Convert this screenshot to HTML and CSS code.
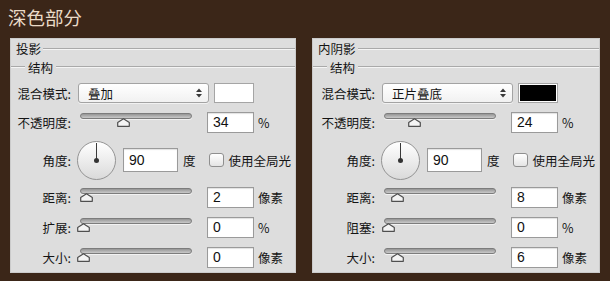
FILE: index.html
```html
<!DOCTYPE html>
<html lang="zh-CN">
<head>
    <meta charset="UTF-8">
    <meta name="viewport" content="width=device-width, initial-scale=1.0">
    <title>深色部分</title>
    <link rel="stylesheet" href="styles.css">
</head>
<body>
    <h1 class="title">深色部分</h1>

    <div class="panels">
        <!-- 投影 -->
        <section class="panel">
            <div class="group-title"><span>投影</span></div>
            <div class="sub-title"><span>结构</span></div>

            <div class="row row-blend">
                <span class="label">混合模式:</span>
                <div class="select">
                    <span>叠加</span>
                    <svg class="arrows" width="6" height="10" viewBox="0 0 6 10"><polygon points="0,4 3,0.5 6,4"/><polygon points="0,6 3,9.5 6,6"/></svg>
                </div>
                <div class="swatch"></div>
            </div>

            <div class="row row-slider">
                <span class="label">不透明度:</span>
                <div class="slider">
                    <div class="track"></div>
                    <svg class="thumb" style="left: 40px" width="13" height="9" viewBox="0 0 13 9"><polygon points="6.5,0.7 12.3,4.5 12.3,8.3 0.7,8.3 0.7,4.5"/></svg>
                </div>
                <div class="field">34</div>
                <span class="unit">%</span>
            </div>

            <div class="row row-angle">
                <span class="label">角度:</span>
                <div class="dial"><div class="needle"></div><div class="hub"></div></div>
                <div class="field field-angle">90</div>
                <span class="unit">度</span>
                <div class="check"></div>
                <span class="check-text">使用全局光</span>
            </div>

            <div class="row row-slider">
                <span class="label">距离:</span>
                <div class="slider">
                    <div class="track"></div>
                    <svg class="thumb" style="left: 3px" width="13" height="9" viewBox="0 0 13 9"><polygon points="6.5,0.7 12.3,4.5 12.3,8.3 0.7,8.3 0.7,4.5"/></svg>
                </div>
                <div class="field">2</div>
                <span class="unit">像素</span>
            </div>

            <div class="row row-slider">
                <span class="label">扩展:</span>
                <div class="slider">
                    <div class="track"></div>
                    <svg class="thumb" style="left: 0px" width="13" height="9" viewBox="0 0 13 9"><polygon points="6.5,0.7 12.3,4.5 12.3,8.3 0.7,8.3 0.7,4.5"/></svg>
                </div>
                <div class="field">0</div>
                <span class="unit">%</span>
            </div>

            <div class="row row-slider">
                <span class="label">大小:</span>
                <div class="slider">
                    <div class="track"></div>
                    <svg class="thumb" style="left: 0px" width="13" height="9" viewBox="0 0 13 9"><polygon points="6.5,0.7 12.3,4.5 12.3,8.3 0.7,8.3 0.7,4.5"/></svg>
                </div>
                <div class="field">0</div>
                <span class="unit">像素</span>
            </div>
        </section>

        <!-- 内阴影 -->
        <section class="panel panel-wide">
            <div class="group-title"><span>内阴影</span></div>
            <div class="sub-title"><span>结构</span></div>

            <div class="row row-blend">
                <span class="label">混合模式:</span>
                <div class="select">
                    <span>正片叠底</span>
                    <svg class="arrows" width="6" height="10" viewBox="0 0 6 10"><polygon points="0,4 3,0.5 6,4"/><polygon points="0,6 3,9.5 6,6"/></svg>
                </div>
                <div class="swatch swatch-black"></div>
            </div>

            <div class="row row-slider">
                <span class="label">不透明度:</span>
                <div class="slider">
                    <div class="track"></div>
                    <svg class="thumb" style="left: 27px" width="13" height="9" viewBox="0 0 13 9"><polygon points="6.5,0.7 12.3,4.5 12.3,8.3 0.7,8.3 0.7,4.5"/></svg>
                </div>
                <div class="field">24</div>
                <span class="unit">%</span>
            </div>

            <div class="row row-angle">
                <span class="label">角度:</span>
                <div class="dial"><div class="needle"></div><div class="hub"></div></div>
                <div class="field field-angle">90</div>
                <span class="unit">度</span>
                <div class="check"></div>
                <span class="check-text">使用全局光</span>
            </div>

            <div class="row row-slider">
                <span class="label">距离:</span>
                <div class="slider">
                    <div class="track"></div>
                    <svg class="thumb" style="left: 10px" width="13" height="9" viewBox="0 0 13 9"><polygon points="6.5,0.7 12.3,4.5 12.3,8.3 0.7,8.3 0.7,4.5"/></svg>
                </div>
                <div class="field">8</div>
                <span class="unit">像素</span>
            </div>

            <div class="row row-slider">
                <span class="label">阻塞:</span>
                <div class="slider">
                    <div class="track"></div>
                    <svg class="thumb" style="left: 1px" width="13" height="9" viewBox="0 0 13 9"><polygon points="6.5,0.7 12.3,4.5 12.3,8.3 0.7,8.3 0.7,4.5"/></svg>
                </div>
                <div class="field">0</div>
                <span class="unit">%</span>
            </div>

            <div class="row row-slider">
                <span class="label">大小:</span>
                <div class="slider">
                    <div class="track"></div>
                    <svg class="thumb" style="left: 10px" width="13" height="9" viewBox="0 0 13 9"><polygon points="6.5,0.7 12.3,4.5 12.3,8.3 0.7,8.3 0.7,4.5"/></svg>
                </div>
                <div class="field">6</div>
                <span class="unit">像素</span>
            </div>
        </section>
    </div>
</body>
</html>
```

FILE: styles.css
```css
:root {
    --background-color: #3b2618;
    --title-color: #eadbc8;
    --panel-background: #dddddd;
    --text-color: #141414;
    --edge-color: #9a9a9a;
}

body {
    margin: 0;
    width: 610px;
    height: 281px;
    overflow: hidden;
    background: var(--background-color);
    font-family: "Noto Sans CJK SC", sans-serif;
}

.title {
    margin: 0;
    height: 38px;
    padding: 5px 0 0 8px;
    box-sizing: border-box;
    font-size: 18.5px;
    font-weight: normal;
    line-height: 24px;
    color: var(--title-color);
}

.panels {
    display: flex;
    gap: 16px;
    padding-left: 10px;
}

.panel {
    width: 286px;
    height: 235px;
    box-sizing: border-box;
    background: var(--panel-background);
    border: 1px solid #cbcbcb;
    font-size: 12.5px;
    color: var(--text-color);
}

.panel-wide {
    width: 288px;
}

/* etched section titles */
.group-title,
.sub-title {
    display: flex;
    align-items: center;
}

.group-title {
    height: 19px;
    padding-left: 5px;
}

.sub-title {
    height: 18px;
}

.group-title::after,
.sub-title::after,
.sub-title::before {
    content: "";
    flex: 1;
    border-top: 1px solid #a9a9a9;
    border-bottom: 1px solid #f4f4f4;
}

.group-title::after {
    margin-left: 2px;
}

.sub-title::before {
    flex: 0 0 14px;
    margin-right: 3px;
}

.sub-title::after {
    margin-left: 3px;
}

/* rows */
.row {
    display: flex;
    align-items: center;
}

.row-blend {
    height: 20px;
    margin-top: 7px;
}

.row-slider {
    height: 21px;
    margin-top: 9px;
}

.row-angle {
    height: 40px;
    margin-top: 7px;
}

.row-angle + .row-slider {
    margin-top: 7px;
}

.label {
    width: 60px;
    flex-shrink: 0;
    text-align: right;
}

.panel-wide .label {
    width: 62px;
}

.select {
    display: flex;
    align-items: center;
    justify-content: space-between;
    width: 131px;
    height: 20px;
    margin-left: 7px;
    padding: 0 6px 0 9px;
    box-sizing: border-box;
    border: 1px solid #a3a3a3;
    border-radius: 3px;
    background: linear-gradient(#ffffff, #f1f1f1);
    box-shadow: 0 1px 0 rgba(255, 255, 255, 0.6);
}

.arrows {
    fill: #3a3a3a;
}

.swatch {
    width: 40px;
    height: 20px;
    margin-left: 5px;
    box-sizing: border-box;
    border: 1px solid #a5a5a5;
    background: #fff;
}

.swatch-black {
    background: #000;
    box-shadow: inset 0 0 0 1px #fff;
}

.slider {
    position: relative;
    align-self: flex-start;
    width: 115px;
    height: 21px;
    margin-left: 6px;
}

.track {
    height: 6px;
    margin: 1px 0 0 3px;
    box-sizing: border-box;
    border: 1px solid #7c7c7c;
    border-radius: 3px;
    background: linear-gradient(#959595, #c9c9c9);
    box-shadow: 0 1px 0 #f2f2f2;
}

.thumb {
    position: absolute;
    top: 6px;
}

.thumb polygon {
    fill: #f4f4f4;
    stroke: #4f4f4f;
    stroke-width: 1.2;
    stroke-linejoin: round;
}

.field {
    width: 47px;
    height: 21px;
    margin-left: 15px;
    padding-left: 5px;
    box-sizing: border-box;
    border: 1px solid var(--edge-color);
    background: #fff;
    box-shadow: inset 0 1px 1px rgba(0, 0, 0, 0.12);
    font-family: "Liberation Sans", Arial, sans-serif;
    font-size: 14px;
    line-height: 19px;
    color: #111;
}

.field-angle {
    width: 55px;
    height: 24px;
    margin-left: 7px;
    line-height: 22px;
}

.unit {
    margin-left: 4px;
}

.field-angle + .unit {
    margin-left: 5px;
}

.dial {
    position: relative;
    width: 39px;
    height: 39px;
    margin-left: 6px;
    box-sizing: border-box;
    border: 1px solid #949494;
    border-radius: 50%;
    background: linear-gradient(#ffffff, #dadada);
}

.needle {
    position: absolute;
    left: 18px;
    top: 1px;
    width: 1px;
    height: 18px;
    background: #3a3a3a;
}

.hub {
    position: absolute;
    left: 16px;
    top: 16px;
    width: 5px;
    height: 5px;
    border-radius: 50%;
    background: #333;
}

.check {
    width: 15px;
    height: 14px;
    margin-left: 13px;
    box-sizing: border-box;
    border: 1px solid #8f8f8f;
    border-radius: 3px;
    background: linear-gradient(#ffffff, #e4e4e4);
}

.check-text {
    margin-left: 5px;
}
```
